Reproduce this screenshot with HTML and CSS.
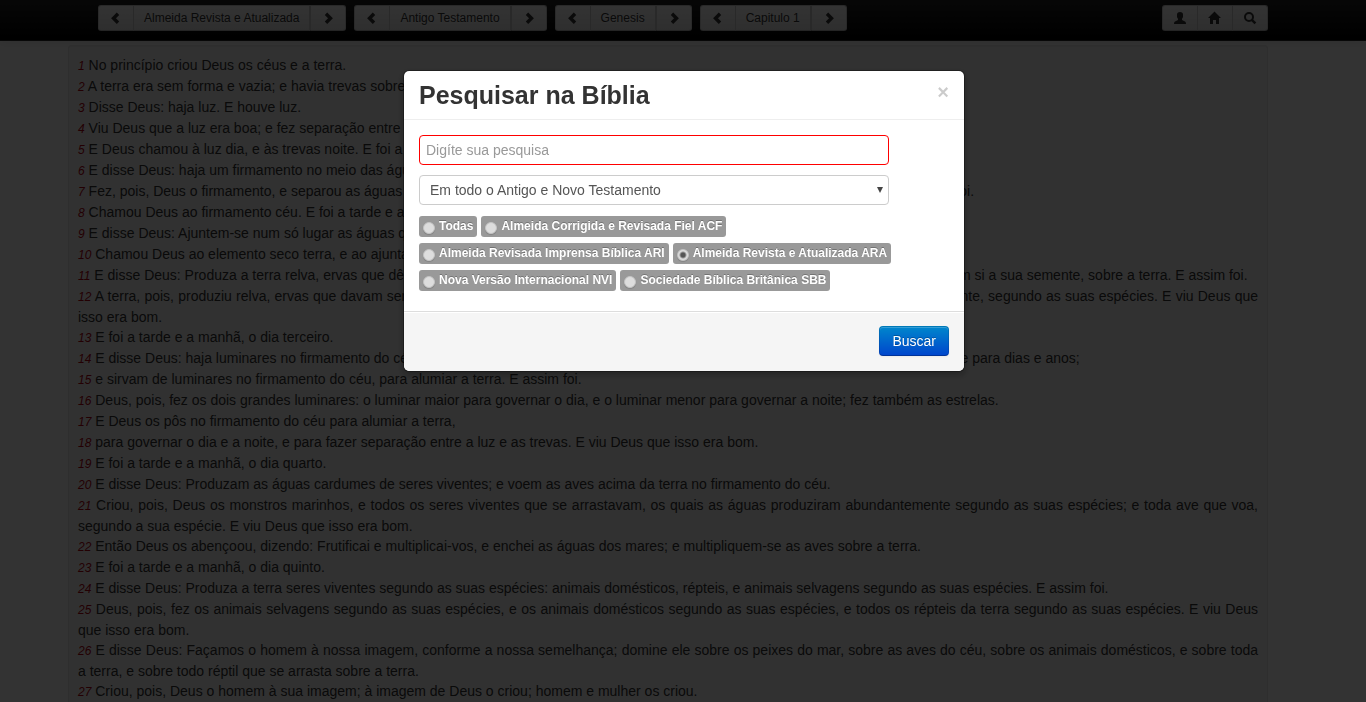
FILE: index.html
```html
<!DOCTYPE html>
<html lang="pt-BR">
<head>
<meta charset="utf-8">
<meta name="viewport" content="width=device-width, initial-scale=1">
<title>Bíblia - Genesis 1</title>
<link rel="stylesheet" href="styles.css">
</head>
<body>
<svg class="sprite" aria-hidden="true">
  <symbol id="prev" viewBox="0 0 14 14"><path d="M9 2.700L4.500 7.200L9 11.700" fill="none" stroke="currentColor" stroke-width="3.400"/></symbol>
  <symbol id="next" viewBox="0 0 14 14"><path d="M5 2.700L9.500 7.200L5 11.700" fill="none" stroke="currentColor" stroke-width="3.400"/></symbol>
  <symbol id="user" viewBox="0 0 14 14"><path d="M7 1C9 1 10 2 10 3.500V5.500C10 6.500 9.500 7.200 9 7.800V9L12 10.500C12.800 11 13 11.800 13 13H1C1 11.800 1.200 11 2 10.500L5 9V7.800C4.500 7.200 4 6.500 4 5.500V3.500C4 2 5 1 7 1Z" fill="currentColor"/></symbol>
  <symbol id="home" viewBox="0 0 14 14"><path d="M6.500 .500L13 7H11V13H8V9H5V13H2V7H0Z" fill="currentColor"/></symbol>
  <symbol id="search" viewBox="0 0 14 14"><circle cx="6" cy="6" r="4" fill="none" stroke="currentColor" stroke-width="2"/><path d="M8.800 8.800L12.400 12.400" stroke="currentColor" stroke-width="2.400"/></symbol>
</svg>

<header class="navbar">
  <nav class="container navbar-inner" aria-label="Navegação">
    <div class="btn-group">
      <button class="btn" aria-label="Versão anterior"><svg class="icon"><use href="#prev"/></svg></button>
      <button class="btn btn-label">Almeida Revista e Atualizada</button>
      <button class="btn" aria-label="Próxima versão"><svg class="icon"><use href="#next"/></svg></button>
    </div>
    <div class="btn-group">
      <button class="btn" aria-label="Testamento anterior"><svg class="icon"><use href="#prev"/></svg></button>
      <button class="btn btn-label">Antigo Testamento</button>
      <button class="btn" aria-label="Próximo testamento"><svg class="icon"><use href="#next"/></svg></button>
    </div>
    <div class="btn-group">
      <button class="btn" aria-label="Livro anterior"><svg class="icon"><use href="#prev"/></svg></button>
      <button class="btn btn-label">Genesis</button>
      <button class="btn" aria-label="Próximo livro"><svg class="icon"><use href="#next"/></svg></button>
    </div>
    <div class="btn-group">
      <button class="btn" aria-label="Capitulo anterior"><svg class="icon"><use href="#prev"/></svg></button>
      <button class="btn btn-label">Capitulo 1</button>
      <button class="btn" aria-label="Próximo capitulo"><svg class="icon"><use href="#next"/></svg></button>
    </div>
    <div class="btn-group tools">
      <button class="btn" aria-label="Usuário"><svg class="icon"><use href="#user"/></svg></button>
      <button class="btn" aria-label="Início"><svg class="icon"><use href="#home"/></svg></button>
      <button class="btn" aria-label="Pesquisar"><svg class="icon"><use href="#search"/></svg></button>
    </div>
  </nav>
</header>

<main class="container">
  <article class="well">
    <p><em>1</em> No princípio criou Deus os céus e a terra.</p>
    <p><em>2</em> A terra era sem forma e vazia; e havia trevas sobre a face do abismo, mas o Espírito de Deus pairava sobre a face das águas.</p>
    <p><em>3</em> Disse Deus: haja luz. E houve luz.</p>
    <p><em>4</em> Viu Deus que a luz era boa; e fez separação entre a luz e as trevas.</p>
    <p><em>5</em> E Deus chamou à luz dia, e às trevas noite. E foi a tarde e a manhã, o dia primeiro.</p>
    <p><em>6</em> E disse Deus: haja um firmamento no meio das águas, e haja separação entre águas e águas.</p>
    <p><em>7</em> Fez, pois, Deus o firmamento, e separou as águas que estavam debaixo do firmamento das que estavam por cima do firmamento. E assim foi.</p>
    <p><em>8</em> Chamou Deus ao firmamento céu. E foi a tarde e a manhã, o dia segundo.</p>
    <p><em>9</em> E disse Deus: Ajuntem-se num só lugar as águas que estão debaixo do céu, e apareça o elemento seco. E assim foi.</p>
    <p><em>10</em> Chamou Deus ao elemento seco terra, e ao ajuntamento das águas mares. E viu Deus que isso era bom.</p>
    <p><em>11</em> E disse Deus: Produza a terra relva, ervas que dêem semente, e árvores frutíferas que, segundo as suas espécies, dêem fruto que tenha em si a sua semente, sobre a terra. E assim foi.</p>
    <p><em>12</em> A terra, pois, produziu relva, ervas que davam semente segundo as suas espécies, e árvores que davam fruto que tinha em si a sua semente, segundo as suas espécies. E viu Deus que isso era bom.</p>
    <p><em>13</em> E foi a tarde e a manhã, o dia terceiro.</p>
    <p><em>14</em> E disse Deus: haja luminares no firmamento do céu, para fazerem separação entre o dia e a noite; sejam eles para sinais e para estações, e para dias e anos;</p>
    <p><em>15</em> e sirvam de luminares no firmamento do céu, para alumiar a terra. E assim foi.</p>
    <p><em>16</em> Deus, pois, fez os dois grandes luminares: o luminar maior para governar o dia, e o luminar menor para governar a noite; fez também as estrelas.</p>
    <p><em>17</em> E Deus os pôs no firmamento do céu para alumiar a terra,</p>
    <p><em>18</em> para governar o dia e a noite, e para fazer separação entre a luz e as trevas. E viu Deus que isso era bom.</p>
    <p><em>19</em> E foi a tarde e a manhã, o dia quarto.</p>
    <p><em>20</em> E disse Deus: Produzam as águas cardumes de seres viventes; e voem as aves acima da terra no firmamento do céu.</p>
    <p><em>21</em> Criou, pois, Deus os monstros marinhos, e todos os seres viventes que se arrastavam, os quais as águas produziram abundantemente segundo as suas espécies; e toda ave que voa, segundo a sua espécie. E viu Deus que isso era bom.</p>
    <p><em>22</em> Então Deus os abençoou, dizendo: Frutificai e multiplicai-vos, e enchei as águas dos mares; e multipliquem-se as aves sobre a terra.</p>
    <p><em>23</em> E foi a tarde e a manhã, o dia quinto.</p>
    <p><em>24</em> E disse Deus: Produza a terra seres viventes segundo as suas espécies: animais domésticos, répteis, e animais selvagens segundo as suas espécies. E assim foi.</p>
    <p><em>25</em> Deus, pois, fez os animais selvagens segundo as suas espécies, e os animais domésticos segundo as suas espécies, e todos os répteis da terra segundo as suas espécies. E viu Deus que isso era bom.</p>
    <p><em>26</em> E disse Deus: Façamos o homem à nossa imagem, conforme a nossa semelhança; domine ele sobre os peixes do mar, sobre as aves do céu, sobre os animais domésticos, e sobre toda a terra, e sobre todo réptil que se arrasta sobre a terra.</p>
    <p><em>27</em> Criou, pois, Deus o homem à sua imagem; à imagem de Deus o criou; homem e mulher os criou.</p>
  </article>
</main>

<div class="backdrop"></div>

<form class="modal" role="dialog" aria-modal="true" aria-labelledby="modal-title">
  <div class="modal-header">
    <h3 id="modal-title">Pesquisar na Bíblia</h3>
    <button type="button" class="close" aria-label="Fechar">×</button>
  </div>
  <div class="modal-body">
    <input class="field query" type="text" placeholder="Digíte sua pesquisa" aria-label="Pesquisa">
    <div class="select-wrap">
      <select class="field" aria-label="Onde pesquisar">
        <option>Em todo o Antigo e Novo Testamento</option>
      </select>
      <svg class="caret" viewBox="0 0 6 6" aria-hidden="true"><path d="M0 0H6L3 6Z" fill="#444"/></svg>
    </div>
    <div class="versions">
      <label class="version"><input type="radio" name="versao">Todas</label>
      <label class="version"><input type="radio" name="versao">Almeida Corrigida e Revisada Fiel ACF</label>
      <label class="version"><input type="radio" name="versao">Almeida Revisada Imprensa Bíblica ARI</label>
      <label class="version"><input type="radio" name="versao" checked>Almeida Revista e Atualizada ARA</label>
      <label class="version"><input type="radio" name="versao">Nova Versão Internacional NVI</label>
      <label class="version"><input type="radio" name="versao">Sociedade Bíblica Britânica SBB</label>
    </div>
  </div>
  <div class="modal-footer">
    <button type="submit" class="btn-primary">Buscar</button>
  </div>
</form>
</body>
</html>
```
FILE: styles.css
```css
* {
  box-sizing: border-box;
}

body {
  margin: 0;
  height: 100vh;
  overflow: hidden;
  background: #fff;
  color: #333;
  font: 14px/20px "Liberation Sans", Arial, sans-serif;
}

button,
input,
select {
  font-family: inherit;
}

.sprite {
  display: none;
}

.container {
  max-width: 1170px;
  margin: 0 auto;
}

/* Top bar */
.navbar {
  padding: 5px 0 9px;
  border-bottom: 1px solid #252525;
  background: linear-gradient(#222, #000);
  box-shadow: 0 1px 10px rgba(0, 0, 0, .1);
}

.navbar-inner {
  display: flex;
  gap: 8px;
}

.btn-group {
  display: flex;
}

.tools {
  margin-left: auto;
}

.btn {
  display: flex;
  align-items: center;
  padding: 2px 10px;
  border: 1px solid #bbb;
  border-color: #ccc #ccc #b3b3b3;
  background: linear-gradient(#fff, #e6e6e6);
  box-shadow: inset 0 1px 0 rgba(255, 255, 255, .2);
  color: #333;
  font-size: 12px;
  line-height: 20px;
  text-shadow: 0 1px 1px rgba(255, 255, 255, .75);
}

.btn-label,
.tools .btn + .btn {
  margin-left: -1px;
}

.btn:first-child {
  border-radius: 3px 0 0 3px;
}

.btn:last-child {
  border-radius: 0 3px 3px 0;
}

.icon {
  width: 14px;
  height: 14px;
}

/* Chapter text */
.well {
  margin: 4px 0 20px -30px;
  padding: 9px;
  border: 1px solid #e3e3e3;
  border-radius: 3px;
  background: #f5f5f5;
  box-shadow: inset 0 1px 1px rgba(0, 0, 0, .05);
  text-align: justify;
}

.well p {
  margin: 0;
}

.well em {
  color: #b00010;
  font-size: 12px;
}

/* Dialog */
.backdrop {
  position: fixed;
  inset: 0;
  background: #000;
  opacity: .8;
}

.modal {
  position: fixed;
  top: 10%;
  left: 50%;
  width: 562px;
  margin-left: -280px;
  border: 1px solid rgba(0, 0, 0, .3);
  border-radius: 6px;
  background: #fff;
  background-clip: padding-box;
  box-shadow: 0 3px 7px rgba(0, 0, 0, .3);
}

.modal-header {
  display: flex;
  justify-content: space-between;
  align-items: flex-start;
  padding: 9px 15px;
  border-bottom: 1px solid #eee;
}

.modal-header h3 {
  margin: 0;
  font-size: 25px;
  line-height: 30px;
}

.close {
  margin: 2px 0 0;
  padding: 0;
  border: 0;
  background: none;
  color: #000;
  font-size: 20px;
  font-weight: bold;
  line-height: 20px;
  opacity: .2;
}

.modal-body {
  padding: 15px;
}

.field {
  display: block;
  width: 100%;
  height: 30px;
  border: 1px solid #ccc;
  border-radius: 4px;
  background: #fff;
  color: #555;
  font-size: 14px;
  line-height: 20px;
}

.query {
  max-width: 470px;
  margin-bottom: 10px;
  padding: 4px 6px;
  border-color: #f00;
}

.query::placeholder {
  color: #999;
}

.select-wrap {
  position: relative;
  max-width: 470px;
}

.select-wrap select {
  appearance: none;
  padding: 4px 10px;
}

.caret {
  position: absolute;
  top: 12px;
  right: 6px;
  width: 6px;
  height: 6px;
  pointer-events: none;
}

.versions {
  display: flex;
  flex-wrap: wrap;
  gap: 6px 4px;
  max-width: 480px;
  padding: 11px 0 5px;
}

.version {
  display: flex;
  gap: 4px;
  height: 21px;
  padding: 3px 4px;
  border-radius: 3px;
  background: #999;
  color: #fff;
  font-size: 12px;
  font-weight: bold;
  line-height: 14px;
  text-shadow: 0 -1px 0 rgba(0, 0, 0, .25);
}

.version input {
  appearance: none;
  width: 12px;
  height: 12px;
  margin: 3px 0 0;
  border: 1px solid #c4c4c4;
  border-radius: 50%;
  background: #ddd;
  box-shadow: 0 1px 1px rgba(0, 0, 0, .15);
}

.version input:checked {
  background: radial-gradient(circle, #555 0 2px, #ddd 4px);
}

.modal-footer {
  display: flex;
  justify-content: flex-end;
  padding: 14px 15px 15px;
  border-top: 1px solid #ddd;
  border-radius: 0 0 6px 6px;
  background: #f5f5f5;
  box-shadow: inset 0 1px 0 #fff;
}

.btn-primary {
  padding: 4px 12px;
  border: 1px solid #04c;
  border-color: rgba(0, 0, 0, .1) rgba(0, 0, 0, .1) rgba(0, 0, 0, .25);
  border-radius: 4px;
  background: linear-gradient(#08c, #04c) border-box;
  box-shadow: inset 0 1px 0 rgba(255, 255, 255, .2), 0 1px 2px rgba(0, 0, 0, .05);
  color: #fff;
  font-size: 14px;
  line-height: 20px;
  text-shadow: 0 -1px 0 rgba(0, 0, 0, .25);
}
```
